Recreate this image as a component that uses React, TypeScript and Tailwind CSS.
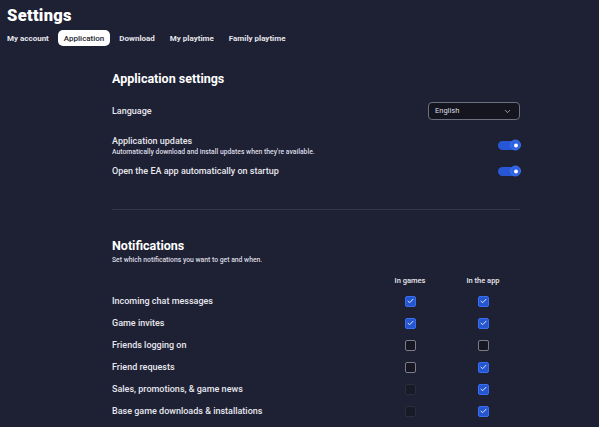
import React from 'react';
import { ChevronDown } from 'lucide-react';

type Box = 'on' | 'off' | 'disabled';

interface NotificationRow {
  label: string;
  inGames: Box;
  inApp: Box;
}

const tabs = ['My account', 'Application', 'Download', 'My playtime', 'Family playtime'];

const rows: NotificationRow[] = [
  { label: 'Incoming chat messages', inGames: 'on', inApp: 'on' },
  { label: 'Game invites', inGames: 'on', inApp: 'on' },
  { label: 'Friends logging on', inGames: 'off', inApp: 'off' },
  { label: 'Friend requests', inGames: 'off', inApp: 'on' },
  { label: 'Sales, promotions, & game news', inGames: 'disabled', inApp: 'on' },
  { label: 'Base game downloads & installations', inGames: 'disabled', inApp: 'on' },
];

const Checkbox: React.FC<{ state: Box }> = ({ state }) => {
  if (state === 'on') {
    return (
      <div className="w-[11px] h-[11px] rounded-[2px] bg-[#2556d2] border border-[#3a6ef0] flex items-center justify-center">
        <svg width="7" height="6" viewBox="0 0 7 6" fill="none">
          <path d="M1 3.2 L2.7 4.7 L6 1.2" stroke="#dfe6f7" strokeWidth="1" strokeLinecap="round" strokeLinejoin="round" />
        </svg>
      </div>
    );
  }
  if (state === 'off') {
    return <div className="w-[11px] h-[11px] rounded-[2px] bg-[#161722] border-[1.5px] border-[#7a7c88]" />;
  }
  return <div className="w-[11px] h-[11px] rounded-[2px] bg-[#191a28] border border-[#2b2d3c]" />;
};

const Toggle: React.FC = () => (
  <div className="relative w-[22px] h-[9px] rounded-full bg-[#2757d4]">
    <div className="absolute right-[-1px] top-1/2 -translate-y-1/2 w-[11px] h-[11px] rounded-full bg-[#2f62e0] border-[1.5px] border-[#3d72f2] flex items-center justify-center">
      <div className="w-[4px] h-[4px] rounded-full bg-white" />
    </div>
  </div>
);

const App: React.FC = () => {
  return (
    <div className="min-h-screen w-full bg-[#1e2033] text-[#e8e8ee] font-['Roboto',sans-serif] overflow-hidden">
      <div className="px-[7px] pt-[4px]">
        <h1 className="text-[16.5px] leading-[24px] font-black text-white tracking-[0.3px]">Settings</h1>
      </div>
      <div className="flex items-center gap-[3px] px-[1px] mt-[2px]">
        {tabs.map((t) => (
          <div
            key={t}
            className={
              t === 'Application'
                ? 'h-[16px] px-[6px] pt-[1px] flex items-center rounded-[5px] bg-white text-[#23252f] text-[8px] font-medium'
                : 'h-[16px] px-[6px] pt-[1px] flex items-center text-[8px] font-bold text-[#e6e6ec]'
            }
          >
            {t}
          </div>
        ))}
      </div>

      <div className="ml-[112px] w-[408px]">
        <h2 className="mt-[24px] h-[18px] leading-[18px] text-[12.5px] font-bold text-white">Application settings</h2>

        <div className="mt-[14px] h-[18px] flex items-center justify-between">
          <span className="pt-[1px] text-[9px] font-medium">Language</span>
          <div className="w-[92px] h-[18px] rounded-[4px] border border-[#6d707e] bg-[#14151f] flex items-center justify-between pl-[6px] pr-[7px]">
            <span className="text-[7.5px] text-[#dcdce2]">English</span>
            <ChevronDown size={9} strokeWidth={2} className="text-[#c8c9d0]" />
          </div>
        </div>

        <div className="mt-[13px] flex items-center justify-between">
          <div>
            <div className="h-[14px] leading-[14px] pt-[1px] text-[9px] font-medium">Application updates</div>
            <div className="h-[10px] leading-[10px] text-[6.8px] font-medium text-[#dcdce4]">
              Automatically download and install updates when they're available.
            </div>
          </div>
          <Toggle />
        </div>

        <div className="mt-[7px] h-[14px] flex items-center justify-between">
          <span className="pt-[1px] text-[9px] font-medium">Open the EA app automatically on startup</span>
          <Toggle />
        </div>

        <div className="mt-[31px] h-px bg-[#363849]" />

        <h2 className="mt-[27px] h-[18px] leading-[18px] text-[12.5px] font-bold text-white">Notifications</h2>
        <div className="h-[10px] leading-[10px] text-[6.8px] font-medium text-[#dcdce4]">
          Set which notifications you want to get and when.
        </div>

        <div className="mt-[11px] h-[10px] flex items-center text-[7.5px] font-medium">
          <div className="w-[268px]" />
          <div className="w-[60px] text-center">In games</div>
          <div className="w-[60px] ml-[13px] text-center">In the app</div>
        </div>

        <div className="mt-[4px]">
          {rows.map((r) => (
            <div key={r.label} className="h-[22px] flex items-center">
              <div className="w-[268px] pt-[2px] text-[9px] font-medium">{r.label}</div>
              <div className="w-[60px] flex justify-center">
                <Checkbox state={r.inGames} />
              </div>
              <div className="w-[60px] ml-[13px] flex justify-center">
                <Checkbox state={r.inApp} />
              </div>
            </div>
          ))}
        </div>
      </div>
    </div>
  );
};

export default App;
